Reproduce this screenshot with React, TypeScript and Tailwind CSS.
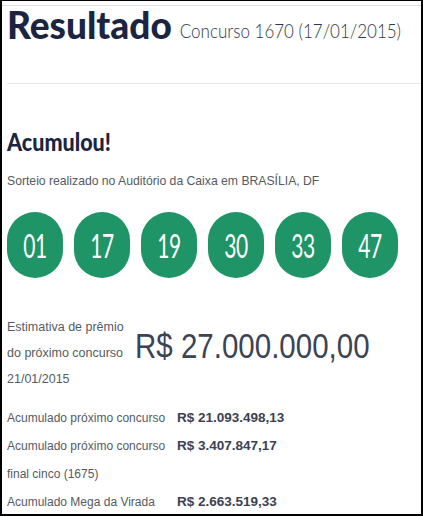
export default function App() {
  const balls = ["01", "17", "19", "30", "33", "47"];
  return (
    <div className="w-[423px] h-[516px] bg-white border-black border-l-2 border-r-2 border-b-2 border-t overflow-hidden">
      <div className="h-[4px]" />
      <div className="h-px bg-[#e2e2e6]" />
      <div className="flex items-baseline pl-[5px] mt-[1px] h-[40px]">
        <span className="font-['Lato',sans-serif] font-black text-[37px] leading-[36px] text-[#1b2440] inline-block scale-y-[1.05] origin-bottom">
          Resultado
        </span>
        <span className="ml-[8px] font-['Lato',sans-serif] font-light text-[17px] text-[#2f3647] inline-block scale-y-[1.18] origin-bottom">
          Concurso 1670 (17/01/2015)
        </span>
      </div>
      <div className="mt-[36px] ml-[5px] h-px bg-[#e6e6e6]" />
      <div className="pl-[5px] mt-[46px] font-['Lato',sans-serif] font-black text-[21.5px] leading-[28px] text-[#1b2440] inline-block scale-y-[1.1] origin-bottom">
        Acumulou!
      </div>
      <div className="pl-[5px] mt-[15px] font-['Liberation_Sans',Arial,sans-serif] text-[12.2px] leading-[16px] text-[#555a63]">
        Sorteio realizado no Auditório da Caixa em BRASÍLIA, DF
      </div>
      <div className="flex gap-[11px] pl-[5px] mt-[23px]">
        {balls.map((b) => (
          <div
            key={b}
            className="w-[56px] h-[66px] rounded-full bg-[#1f9467] flex items-center justify-center text-white font-['Lato',sans-serif] font-normal text-[21px]"
          >
            <span className="inline-block scale-y-[1.6] tracking-[-0.5px]">{b}</span>
          </div>
        ))}
      </div>
      <div className="flex items-center pl-[5px] mt-[36px] font-['Liberation_Sans',Arial,sans-serif]">
        <div className="w-[128px] text-[12.5px] leading-[26px] text-[#555a63]">
          <div>Estimativa de prêmio</div>
          <div>do próximo concurso</div>
          <div>21/01/2015</div>
        </div>
        <div className="mb-[14px] text-[29.5px] text-[#3b4355] inline-block scale-y-[1.22] origin-center">
          R$ 27.000.000,00
        </div>
      </div>
      <div className="grid grid-cols-[170px_1fr] pl-[5px] mt-[12px] font-['Liberation_Sans',Arial,sans-serif] text-[12px] leading-[28px] text-[#555a63]">
        <div>Acumulado próximo concurso</div>
        <div className="font-bold text-[13.5px] text-[#3b4152]">R$ 21.093.498,13</div>
        <div>
          Acumulado próximo concurso
          <br />
          final cinco (1675)
        </div>
        <div className="font-bold text-[13.5px] text-[#3b4152]">R$ 3.407.847,17</div>
        <div>Acumulado Mega da Virada</div>
        <div className="font-bold text-[13.5px] text-[#3b4152]">R$ 2.663.519,33</div>
      </div>
    </div>
  );
}
